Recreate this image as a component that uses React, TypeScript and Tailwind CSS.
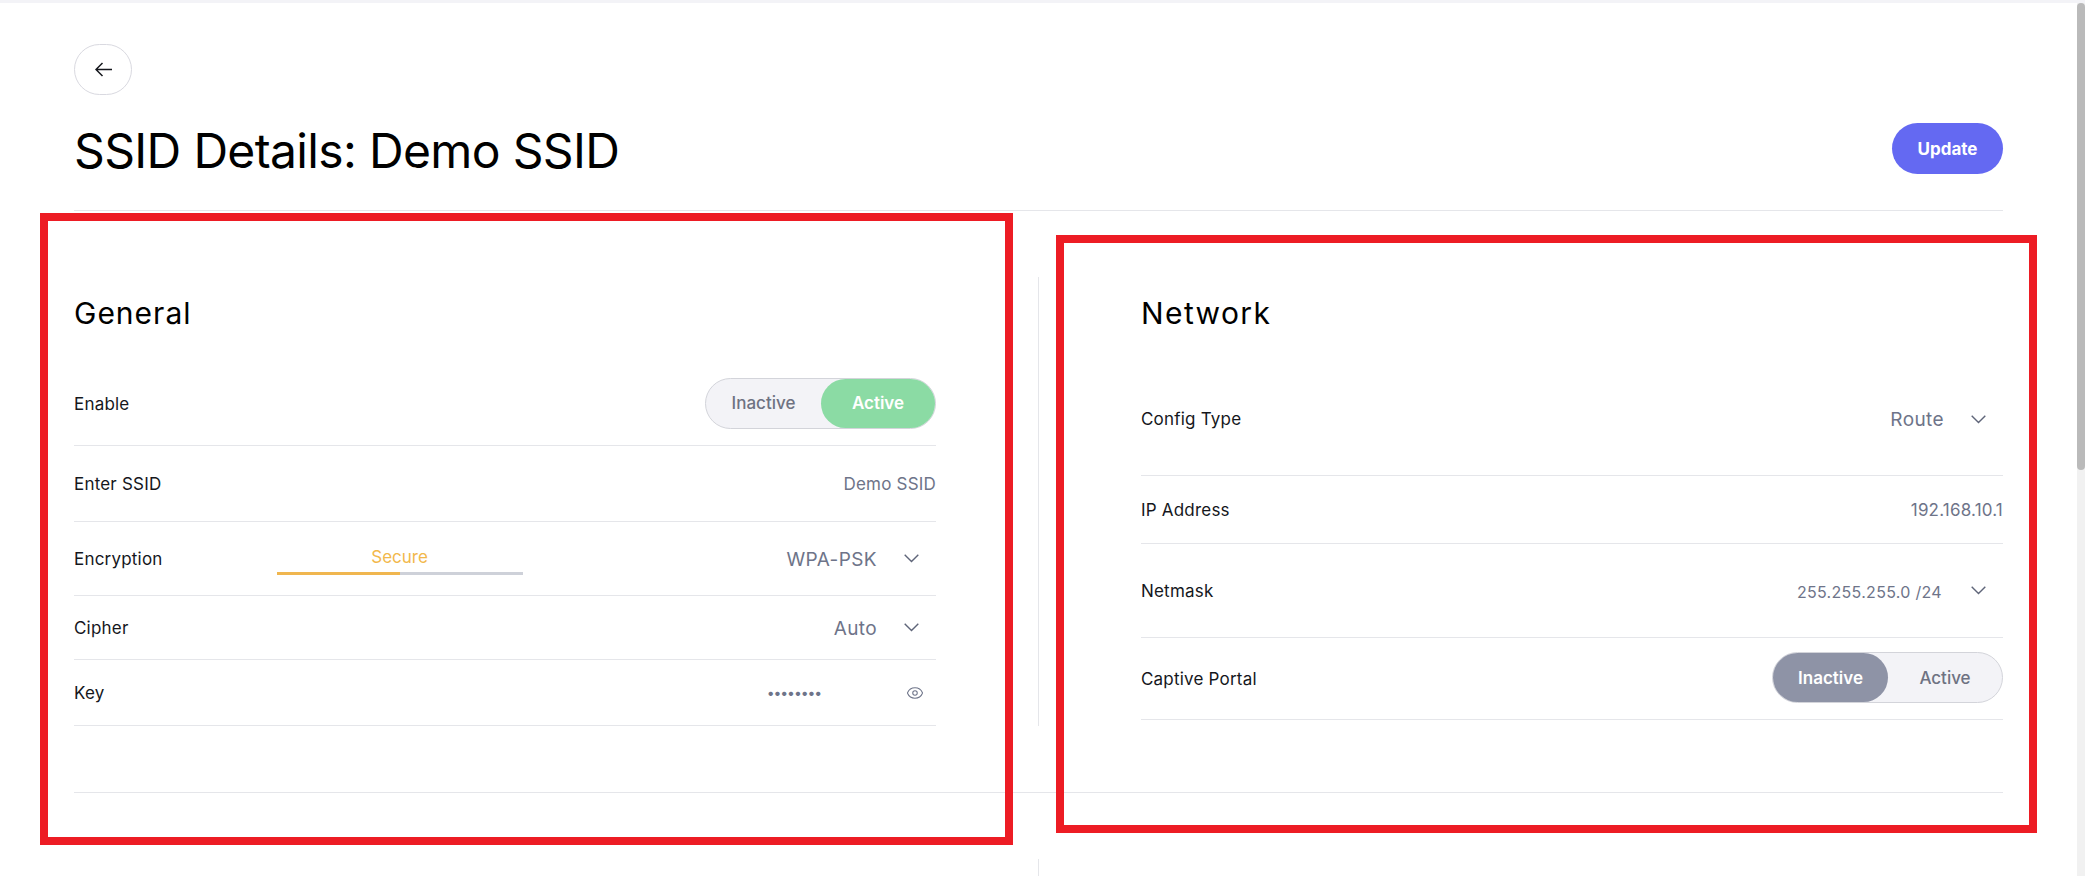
import React from 'react'
import { Eye } from 'lucide-react'

function Chevron() {
  return (
    <svg width="15" height="9" viewBox="0 0 15 9" fill="none" stroke="#5f6579" strokeWidth="1.4" className="shrink-0">
      <path d="M0.7 0.7L7.5 7.6L14.3 0.7" />
    </svg>
  )
}

function Segmented({ active }: { active: boolean }) {
  return (
    <div className="flex w-[231px] h-[51px] mb-[2px] rounded-full border border-[#d3d4da] bg-[#f3f3f7] text-[17px] font-medium">
      <div
        className={
          active
            ? 'w-[115px] pt-[2px] flex items-center justify-center text-[#6e7282]'
            : 'w-[115px] pt-[2px] flex items-center justify-center rounded-full bg-[#8e93a6] text-white font-semibold'
        }
      >
        Inactive
      </div>
      <div
        className={
          active
            ? 'flex-1 pt-[2px] flex items-center justify-center rounded-full bg-[#8bdba4] text-white font-semibold'
            : 'flex-1 pt-[2px] flex items-center justify-center text-[#6e7282]'
        }
      >
        Active
      </div>
    </div>
  )
}

function Row({ label, className, children }: { label: string; className: string; children: React.ReactNode }) {
  return (
    <div className={`flex items-center border-b border-[#e5e6ea] ${className}`}>
      <span className="mt-[2px] text-[17px] tracking-[0.2px] text-[#15171c]">{label}</span>
      {children}
    </div>
  )
}

function Select({ value, small }: { value: string; small?: boolean }) {
  return (
    <div className={small ? 'ml-auto flex items-center gap-[29px] pr-[17px]' : 'ml-auto flex items-center gap-[27px] pr-[17px]'}>
      <span className={small ? 'mt-[2px] text-[16px] tracking-[0.3px] text-[#6e7489]' : 'mt-[3px] text-[19px] tracking-[0.4px] text-[#6e7489]'}>{value}</span>
      <Chevron />
    </div>
  )
}

export default function App() {
  return (
    <div className="relative flex h-screen overflow-hidden bg-white border-t-[3px] border-[#f3f3f7] font-['Inter',sans-serif]">
      <main className="flex-1 px-[74px] pt-[41px]">
        <button className="flex w-[58px] h-[51px] items-center justify-center rounded-full border border-[#d9d9e0] text-[#15171c]">
          <svg width="17" height="15" viewBox="0 0 17 15" fill="none" stroke="currentColor" strokeWidth="1.5">
            <path d="M17 7.5H1M7.5 1L1 7.5L7.5 14" />
          </svg>
        </button>

        <div className="flex items-start justify-between h-[116px] border-b border-[#e5e6ea]">
          <h1 className="mt-[26px] text-[48px] leading-[60px] font-normal tracking-[-0.65px] text-black">SSID Details: Demo SSID</h1>
          <button className="mt-[28px] w-[111px] h-[51px] pt-[2px] rounded-full bg-[#6469f2] text-white text-[17px] font-bold">Update</button>
        </div>

        <div className="flex pt-[66px] pb-[66px] border-b border-[#e5e6ea]">
          <section className="w-[862px]">
            <h2 className="h-[86px] pt-5 text-[30px] leading-8 font-normal tracking-[1px] text-black">General</h2>
            <Row label="Enable" className="h-[83px] justify-between">
              <Segmented active />
            </Row>
            <Row label="Enter SSID" className="h-[76px] justify-between">
              <span className="mt-[2px] text-[17px] tracking-[0.2px] text-[#6e7489]">Demo SSID</span>
            </Row>
            <Row label="Encryption" className="h-[74px]">
              <div className="ml-[114px] mt-[5px] w-[246px] text-center">
                <div className="text-[17px] leading-5 text-[#f2b84c]">Secure</div>
                <div className="mt-[5px] flex h-[3px]">
                  <div className="flex-1 bg-[#f0b64f]" />
                  <div className="flex-1 bg-[#ced1d9]" />
                </div>
              </div>
              <Select value="WPA-PSK" />
            </Row>
            <Row label="Cipher" className="h-[64px]">
              <Select value="Auto" />
            </Row>
            <Row label="Key" className="h-[66px]">
              <div className="ml-auto flex items-center gap-[85px] pr-[12px] text-[#6e7489]">
                <span className="text-[14px] tracking-[-1.1px]">••••••••</span>
                <Eye size={18} strokeWidth={1.4} />
              </div>
            </Row>
          </section>

          <div className="mx-auto w-px bg-[#e5e6ea]" />

          <section className="w-[862px]">
            <h2 className="h-[86px] pt-5 text-[30px] leading-8 font-normal tracking-[1.4px] text-black">Network</h2>
            <Row label="Config Type" className="h-[113px]">
              <Select value="Route" />
            </Row>
            <Row label="IP Address" className="h-[68px] justify-between">
              <span className="mt-[2px] text-[17px] tracking-[0.2px] text-[#6e7489]">192.168.10.1</span>
            </Row>
            <Row label="Netmask" className="h-[94px]">
              <Select value="255.255.255.0 /24" small />
            </Row>
            <Row label="Captive Portal" className="h-[82px] justify-between">
              <Segmented active={false} />
            </Row>
          </section>
        </div>

        <div className="mx-auto mt-[66px] w-px h-[40px] bg-[#e5e6ea]" />
      </main>

      {/* page scrollbar */}
      <aside className="w-2 bg-[#f1f1f1]">
        <div className="h-[467px] rounded-t-sm rounded-b-sm bg-[#bababa]" />
      </aside>

      {/* red annotation boxes sitting on top of the shot */}
      <div className="absolute left-[40px] top-[210px] w-[973px] h-[632px] border-8 border-[#ed1c24]" />
      <div className="absolute left-[1056px] top-[232px] w-[981px] h-[598px] border-8 border-[#ed1c24]" />
    </div>
  )
}
